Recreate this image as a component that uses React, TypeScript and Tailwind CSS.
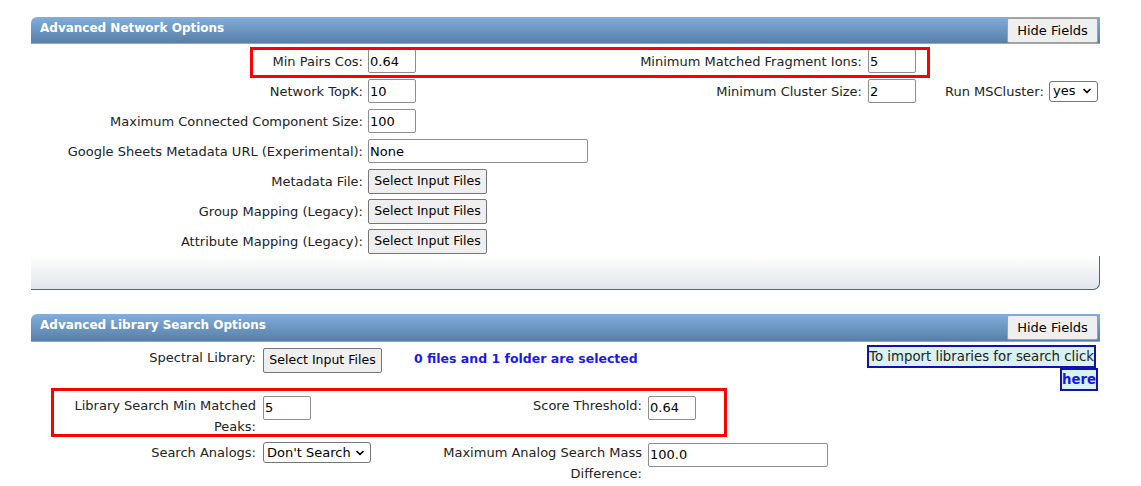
import { ChevronDown } from "lucide-react";

const labelCls = "text-[13px] leading-[21px] text-[#222]";

function TextInput({ value, width = "w-[48px]" }: { value: string; width?: string }) {
  return (
    <input
      readOnly
      value={value}
      className={`${width} h-6 rounded-[2px] border border-[#8d8d8d] bg-white px-[1px] text-[13px] text-black outline-none`}
    />
  );
}

function FileButton() {
  return (
    <button className="h-[25px] w-[119px] rounded-[2px] border border-[#767676] bg-[#efefef] px-0 text-[12.5px] text-black">
      Select Input Files
    </button>
  );
}

function FakeSelect({ value, width }: { value: string; width: string }) {
  return (
    <div
      className={`${width} flex h-[21px] items-center justify-between rounded-[3px] border border-[#767676] bg-white pl-[3px] pr-[4px] text-[13px] text-black`}
    >
      <span className="whitespace-nowrap">{value}</span>
      <ChevronDown className="h-3 w-3" strokeWidth={3.5} />
    </div>
  );
}

function PanelHeader({ title, height }: { title: string; height: string }) {
  return (
    <div
      className={`${height} flex items-start justify-between rounded-tl-[6px] border-b border-[#8ea8c1] bg-linear-to-b from-[#82aedb] to-[#5780a8]`}
    >
      <span className="pl-[9px] pt-[4px] text-[12px] leading-[15px] font-bold text-white">
        {title}
      </span>
      <button className="mr-[2px] mt-px h-[25px] w-[91px] rounded-[2px] border border-[#a0a0a0] bg-[#efefef] text-[13px] text-black">
        Hide Fields
      </button>
    </div>
  );
}

export default function App() {
  return (
    <div className="relative h-[486px] w-[1141px] overflow-hidden bg-white pl-[31px] pt-[17px] font-['DejaVu_Sans',Verdana,sans-serif]">
      {/* Advanced Network Options */}
      <div className="w-[1069px]">
        <PanelHeader title="Advanced Network Options" height="h-[27px]" />
        <div className="grid auto-rows-[30px] grid-cols-[337px_220px_280px_77px_104px_51px] items-center whitespace-nowrap pt-[2px]">
          <div className={`${labelCls} pr-[5px] text-right`}>Min Pairs Cos:</div>
          <div><TextInput value="0.64" /></div>
          <div className={`${labelCls} pr-[6px] text-right`}>Minimum Matched Fragment Ions:</div>
          <div><TextInput value="5" /></div>
          <div className="col-span-2" />

          <div className={`${labelCls} pr-[5px] text-right`}>Network TopK:</div>
          <div><TextInput value="10" /></div>
          <div className={`${labelCls} pr-[6px] text-right`}>Minimum Cluster Size:</div>
          <div><TextInput value="2" /></div>
          <div className={`${labelCls} pr-[6px] text-right`}>Run MSCluster:</div>
          <div><FakeSelect value="yes" width="w-[49px]" /></div>

          <div className={`${labelCls} pr-[5px] text-right`}>Maximum Connected Component Size:</div>
          <div><TextInput value="100" /></div>
          <div className="col-span-4" />

          <div className={`${labelCls} pr-[5px] text-right`}>Google Sheets Metadata URL (Experimental):</div>
          <div><TextInput value="None" width="w-[220px]" /></div>
          <div className="col-span-4" />

          <div className={`${labelCls} pr-[5px] text-right`}>Metadata File:</div>
          <div><FileButton /></div>
          <div className="col-span-4" />

          <div className={`${labelCls} pr-[5px] text-right`}>Group Mapping (Legacy):</div>
          <div><FileButton /></div>
          <div className="col-span-4" />

          <div className={`${labelCls} pr-[5px] text-right`}>Attribute Mapping (Legacy):</div>
          <div><FileButton /></div>
          <div className="col-span-4" />
        </div>
        <div className="h-[34px] rounded-br-[7px] border-b border-r border-[#4d6782] bg-linear-to-b from-white to-[#e1e6eb]" />
      </div>

      {/* Advanced Library Search Options */}
      <div className="mt-[24px] w-[1069px]">
        <PanelHeader title="Advanced Library Search Options" height="h-[28px]" />
        <div className="grid grid-cols-[232px_151px_234px_200px_252px] items-start">
          <div className={`${labelCls} pr-[7px] pt-[5px] text-right`}>Spectral Library:</div>
          <div className="pt-[5px]"><FileButton /></div>
          <div className="whitespace-nowrap pt-[6px] text-[12.5px] leading-[21px] font-bold text-[#1a1ae8]">
            0 files and 1 folder are selected
          </div>
          <div />
          <div className="pb-[1px] pr-[2px] pt-[3px] text-right text-[13.3px] leading-[23px] text-[#222]">
            <span className="box-decoration-clone border-2 border-[#1212a6] bg-[#d8f1f1] py-[2px]">
              To import libraries for search click{" "}
              <a className="font-bold text-[#1515e6]">here</a>
            </span>
          </div>

          <div className={`${labelCls} pb-[3px] pr-[7px] pt-[3px] text-right`}>
            Library Search Min Matched Peaks:
          </div>
          <div className="pt-[3px]"><TextInput value="5" /></div>
          <div className={`${labelCls} pr-[6px] pt-[3px] text-right`}>Score Threshold:</div>
          <div className="pt-[3px]"><TextInput value="0.64" /></div>
          <div />

          <div className={`${labelCls} pr-[7px] pt-[2px] text-right`}>Search Analogs:</div>
          <div className="pt-[2px]"><FakeSelect value="Don't Search" width="w-[108px]" /></div>
          <div className={`${labelCls} pr-[6px] pt-[2px] text-right`}>
            Maximum Analog Search Mass Difference:
          </div>
          <div className="pt-[2px]"><TextInput value="100.0" width="w-[180px]" /></div>
          <div />
        </div>
      </div>

      {/* annotation boxes */}
      <div className="absolute left-[250px] top-[47px] h-[31px] w-[680px] border-[3px] border-[#ff0000]" />
      <div className="absolute left-[51px] top-[388px] h-[49px] w-[676px] border-[3px] border-[#ff0000]" />
    </div>
  );
}
